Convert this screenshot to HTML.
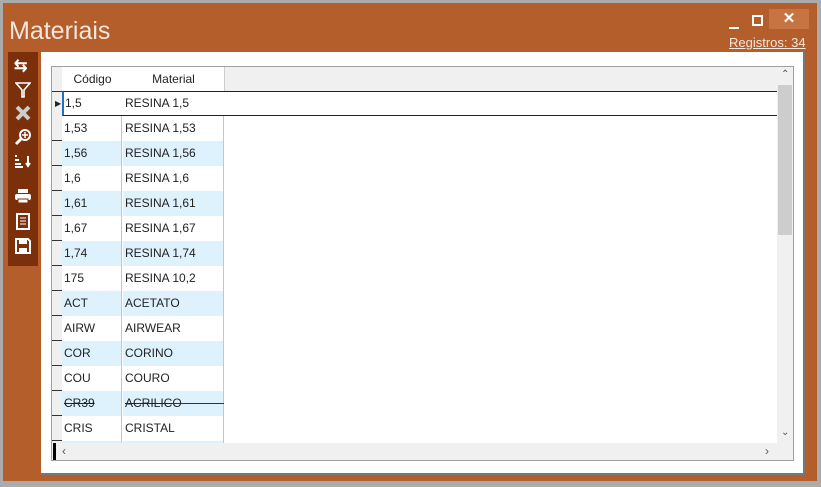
<html><head><style>
body{margin:0;width:821px;height:487px;background:#ababab;position:relative;overflow:hidden;font-family:"Liberation Sans",sans-serif}
.win{position:absolute;left:3px;top:3px;width:814px;height:478px;background:#b35e2b}
.t{position:absolute;left:6px;top:14px;font-size:25px;color:#f4e6dc}
.tb{position:absolute;left:8px;top:52px;width:30px;height:214px;background:#7b2f0a}
.pan{position:absolute;left:41px;top:52px;width:762px;height:421px;background:#fff;border-right:2px solid #777;border-bottom:2px solid #777}
.grid{position:absolute;left:51px;top:66px;width:741px;height:393px;border:1px solid #a0a0a0;background:#fff;overflow:hidden;font-size:12px;color:#222}
.r{position:absolute;left:0;height:25px;width:725px}
.rh{position:absolute;left:0;width:10px;height:24px;background:#f0f0f0;border-bottom:1px solid #333}
.c1,.c2{position:absolute;top:0;height:25px;line-height:25px;border-right:1px solid #c8c0e0}
.c1{left:10px;width:60px;padding-left:2px;box-sizing:border-box}
.c2{left:71px;width:101px;padding-left:2px;box-sizing:border-box}
.b .c1,.b .c2{background:#def2fd}
svg{position:absolute}
</style></head><body>
<div class="win">
<div class="t">Materiais</div>
<div style="position:absolute;left:726px;top:24px;width:10px;height:2px;background:#fff"></div>
<div style="position:absolute;left:749px;top:12px;width:7px;height:7px;border:2px solid #fff"></div>
<div style="position:absolute;left:766px;top:6px;width:40px;height:20px;background:#c87442;color:#fff;text-align:center;font-size:15px;line-height:20px;font-weight:bold">✕</div>
<div style="position:absolute;left:726px;top:32px;font-size:13px;color:#f4e6dc;text-decoration:underline">Registros: 34</div>
</div>
<div class="tb">
<div style="position:absolute;left:6px;top:4px;color:#fff;font-size:16px;font-weight:bold">⇆</div>
<svg style="left:7px;top:30px" width="16" height="16"><path d="M1 1H15L9 8V15H7V8Z" fill="none" stroke="#fff" stroke-width="1.6"/></svg>
<svg style="left:7px;top:53px" width="16" height="16"><path d="M2 2L14 14M14 2L2 14" stroke="#ccc" stroke-width="4"/></svg>
<svg style="left:6px;top:76px" width="18" height="18"><circle cx="11" cy="7" r="5" fill="none" stroke="#fff" stroke-width="2"/><path d="M8 7H14M11 4V10" stroke="#fff" stroke-width="1.5"/><path d="M7 11L2 16" stroke="#fff" stroke-width="3"/></svg>
<svg style="left:6px;top:102px" width="18" height="14"><path d="M1 2h2M1 6h4M1 10h6M1 13h8M14 2v10M12 9l2 3 2-3" stroke="#fff" stroke-width="2" fill="none"/></svg>
<svg style="left:6px;top:136px" width="18" height="16"><rect x="4" y="1" width="10" height="4" fill="#fff"/><rect x="1" y="6" width="16" height="6" rx="2" fill="#fff"/><rect x="4" y="11" width="10" height="4" fill="#fff" stroke="#7b2f0a"/></svg>
<svg style="left:8px;top:161px" width="14" height="17"><rect x="1" y="1" width="12" height="15" fill="none" stroke="#fff" stroke-width="2"/><path d="M4 5h6M4 8h6M4 11h6" stroke="#fff"/></svg>
<svg style="left:7px;top:186px" width="16" height="16"><path d="M1 1H13L15 3V15H1Z" fill="none" stroke="#fff" stroke-width="2"/><rect x="4" y="1" width="8" height="5" fill="#fff"/><rect x="4" y="10" width="8" height="5" fill="#fff"/></svg>
</div>
<div class="pan"></div>
<div class="grid">
<div style="position:absolute;left:0;top:0;width:741px;height:24px;background:#f0f0f0;border-bottom:1px solid #333"></div>
<div style="position:absolute;left:0;top:0;width:10px;height:24px;background:#f0f0f0;border-right:1px solid #ccc"></div>
<div style="position:absolute;left:10px;top:0;width:61px;height:24px;background:#fff;border-right:1px solid #ccc;text-align:center;line-height:24px">Código</div>
<div style="position:absolute;left:71px;top:0;width:101px;height:24px;background:#fff;border-right:1px solid #ccc;text-align:center;line-height:24px">Material</div>
<div class="r" style="top:24px"><div class="rh" style="border-top:1px solid #333"></div><div style="position:absolute;left:10px;top:0;width:714px;height:23px;border:1px solid #222;border-left:2px solid #1e6fc6;background:#fff;line-height:23px"><span style="padding-left:1px">1,5</span><span style="position:absolute;left:61px">RESINA 1,5</span></div><span style="position:absolute;left:3px;top:8px;font-size:8px">▶</span></div>
<div class="r" style="top:49px"><div class="rh"></div><div class="c1">1,53</div><div class="c2">RESINA 1,53</div></div>
<div class="r b" style="top:74px"><div class="rh"></div><div class="c1">1,56</div><div class="c2">RESINA 1,56</div></div>
<div class="r" style="top:99px"><div class="rh"></div><div class="c1">1,6</div><div class="c2">RESINA 1,6</div></div>
<div class="r b" style="top:124px"><div class="rh"></div><div class="c1">1,61</div><div class="c2">RESINA 1,61</div></div>
<div class="r" style="top:149px"><div class="rh"></div><div class="c1">1,67</div><div class="c2">RESINA 1,67</div></div>
<div class="r b" style="top:174px"><div class="rh"></div><div class="c1">1,74</div><div class="c2">RESINA 1,74</div></div>
<div class="r" style="top:199px"><div class="rh"></div><div class="c1">175</div><div class="c2">RESINA 10,2</div></div>
<div class="r b" style="top:224px"><div class="rh"></div><div class="c1">ACT</div><div class="c2">ACETATO</div></div>
<div class="r" style="top:249px"><div class="rh"></div><div class="c1">AIRW</div><div class="c2">AIRWEAR</div></div>
<div class="r b" style="top:274px"><div class="rh"></div><div class="c1">COR</div><div class="c2">CORINO</div></div>
<div class="r" style="top:299px"><div class="rh"></div><div class="c1">COU</div><div class="c2">COURO</div></div>
<div class="r b" style="top:324px"><div class="rh"></div><div class="c1" style="text-decoration:line-through">CR39</div><div class="c2" style="text-decoration:line-through">ACRILICO</div><div style="position:absolute;left:120px;top:12px;width:52px;height:1px;background:#333"></div></div>
<div class="r" style="top:349px"><div class="rh"></div><div class="c1">CRIS</div><div class="c2">CRISTAL</div></div>
<div class="r b" style="top:374px"><div class="rh"></div><div class="c1"></div><div class="c2"></div></div>
<div style="position:absolute;left:725px;top:0;width:16px;height:376px;background:#f0f0f0"></div>
<div style="position:absolute;left:726px;top:18px;width:14px;height:150px;background:#cdcdcd"></div>
<div style="position:absolute;left:729px;top:2px;font-size:10px;color:#555">⌃</div>
<div style="position:absolute;left:729px;top:360px;font-size:10px;color:#555">⌄</div>
<div style="position:absolute;left:0;top:376px;width:741px;height:17px;background:#f0f0f0"></div>
<div style="position:absolute;left:1px;top:376px;width:3px;height:17px;background:#000"></div>
<div style="position:absolute;left:10px;top:377px;font-size:12px;color:#555">‹</div>
<div style="position:absolute;left:713px;top:377px;font-size:12px;color:#555">›</div>
</div>
</body></html>
